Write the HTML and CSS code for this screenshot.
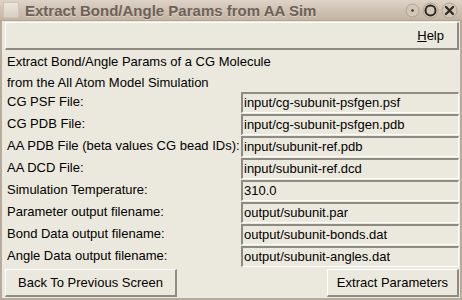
FILE: index.html
```html
<!DOCTYPE html>
<html>
<head>
<meta charset="utf-8">
<link rel="stylesheet" href="styles.css">
</head>
<body>
<div class="window">
  <div class="titlebar">
    <div class="appicon"></div>
    <div class="title">Extract Bond/Angle Params from AA Sim</div>
    <div class="wbtns">
      <span class="wbtn"><svg width="15" height="15" viewBox="0 0 15 15"><circle cx="7.5" cy="7.5" r="6.5" fill="#d2c6b7" stroke="#b3a594"/><circle cx="7.5" cy="7.5" r="1.3" fill="#3a332c"/></svg></span>
      <span class="wbtn"><svg width="17" height="17" viewBox="0 0 17 17"><circle cx="8.5" cy="8.5" r="7.5" fill="#d2c6b7" stroke="#b3a594"/><circle cx="8.5" cy="8.5" r="5" fill="none" stroke="#2e2822" stroke-width="2"/></svg></span>
      <span class="wbtn"><svg width="17" height="17" viewBox="0 0 17 17"><circle cx="8.5" cy="8.5" r="7.5" fill="#d2c6b7" stroke="#b3a594"/><path d="M5 5 L12 12 M12 5 L5 12" stroke="#2e2822" stroke-width="2.2" stroke-linecap="round"/></svg></span>
    </div>
  </div>
  <div class="menubar">
    <button class="menubtn"><u>H</u>elp</button>
  </div>
  <div class="intro">
    <div class="line">Extract Bond/Angle Params of a CG Molecule</div>
    <div class="line">from the All Atom Model Simulation</div>
  </div>
  <div class="form">
    <div class="label">CG PSF File:</div><div class="entry">input/cg-subunit-psfgen.psf</div>
    <div class="label">CG PDB File:</div><div class="entry">input/cg-subunit-psfgen.pdb</div>
    <div class="label">AA PDB File (beta values CG bead IDs):</div><div class="entry">input/subunit-ref.pdb</div>
    <div class="label">AA DCD File:</div><div class="entry">input/subunit-ref.dcd</div>
    <div class="label">Simulation Temperature:</div><div class="entry">310.0</div>
    <div class="label">Parameter output filename:</div><div class="entry">output/subunit.par</div>
    <div class="label">Bond Data output filename:</div><div class="entry">output/subunit-bonds.dat</div>
    <div class="label">Angle Data output filename:</div><div class="entry">output/subunit-angles.dat</div>
  </div>
  <div class="actions">
    <button class="btn back">Back To Previous Screen</button>
    <button class="btn extract">Extract Parameters</button>
  </div>
</div>
</body>
</html>
```

FILE: styles.css
```css
* { box-sizing: border-box; }
html, body { margin: 0; padding: 0; }
body {
  width: 462px;
  height: 300px;
  overflow: hidden;
  background: #ebe9dd;
  font-family: "Liberation Sans", Arial, sans-serif;
  font-size: 13px;
  color: #000;
}
.window {
  width: 462px;
  height: 300px;
  display: flex;
  flex-direction: column;
  border-left: 2px solid #b8ab9c;
  border-right: 2px solid #b8ab9c;
  border-bottom: 2px solid #b8ab9c;
  background: #ebe9dd;
}
.titlebar {
  height: 21px;
  margin: 0 -2px;
  display: flex;
  align-items: center;
  background: linear-gradient(#ddd3c7, #cdbfb0 60%, #c3b4a3);
  border-bottom: 1px solid #b2a493;
}
.appicon {
  width: 16px;
  height: 16px;
  margin-left: 3px;
  border: 1px solid #cfc4b6;
  border-radius: 2px;
  background: linear-gradient(#ece6de, #d8cec2);
}
.title {
  flex: 1;
  margin-left: 6px;
  font-weight: bold;
  font-size: 15px;
  color: #6d6157;
  text-shadow: 0 1px 0 rgba(255,255,255,0.35);
  white-space: nowrap;
}
.wbtns {
  display: flex;
  align-items: center;
  gap: 2px;
  margin-right: 4px;
}
.wbtn { display: flex; }
.menubar {
  height: 28px;
  margin: 1px 1px 0 3px;
  display: flex;
  justify-content: flex-end;
  align-items: center;
  border-top: 1px solid #fff;
  border-left: 1px solid #fff;
  border-right: 2px solid #8e8b80;
  border-bottom: 2px solid #8e8b80;
  background: #ebe9dd;
  padding-right: 13px;
}
.menubtn {
  font: inherit;
  border: none;
  background: none;
  padding: 0;
  color: #000;
}
.intro { padding: 1px 0 0 5px; }
.line { height: 21px; line-height: 21px; white-space: nowrap; }
.form {
  display: grid;
  grid-template-columns: 1fr 216px;
  grid-auto-rows: 22px;
  margin-top: -2px;
  padding-left: 5px;
  padding-right: 1px;
}
.label {
  line-height: 22px;
  white-space: nowrap;
}
.entry {
  margin: 1px 0 1px -2px;
  height: 21px;
  line-height: 18px;
  padding-left: 1px;
  border-top: 2px solid #8e8b80;
  border-left: 2px solid #8e8b80;
  border-bottom: 1px solid #fff;
  border-right: 1px solid #fff;
  background: #ebe9dd;
  white-space: nowrap;
  overflow: hidden;
}
.actions {
  display: flex;
  justify-content: space-between;
  margin: 2px 1px 0 3px;
}
.btn {
  font: inherit;
  height: 28px;
  color: #000;
  background: #ebe9dd;
  border-top: 1px solid #fff;
  border-left: 1px solid #fff;
  border-right: 2px solid #8e8b80;
  border-bottom: 2px solid #8e8b80;
  padding: 0;
  white-space: nowrap;
  text-align: center;
}
.back { width: 172px; }
.extract { width: 132px; }
```
